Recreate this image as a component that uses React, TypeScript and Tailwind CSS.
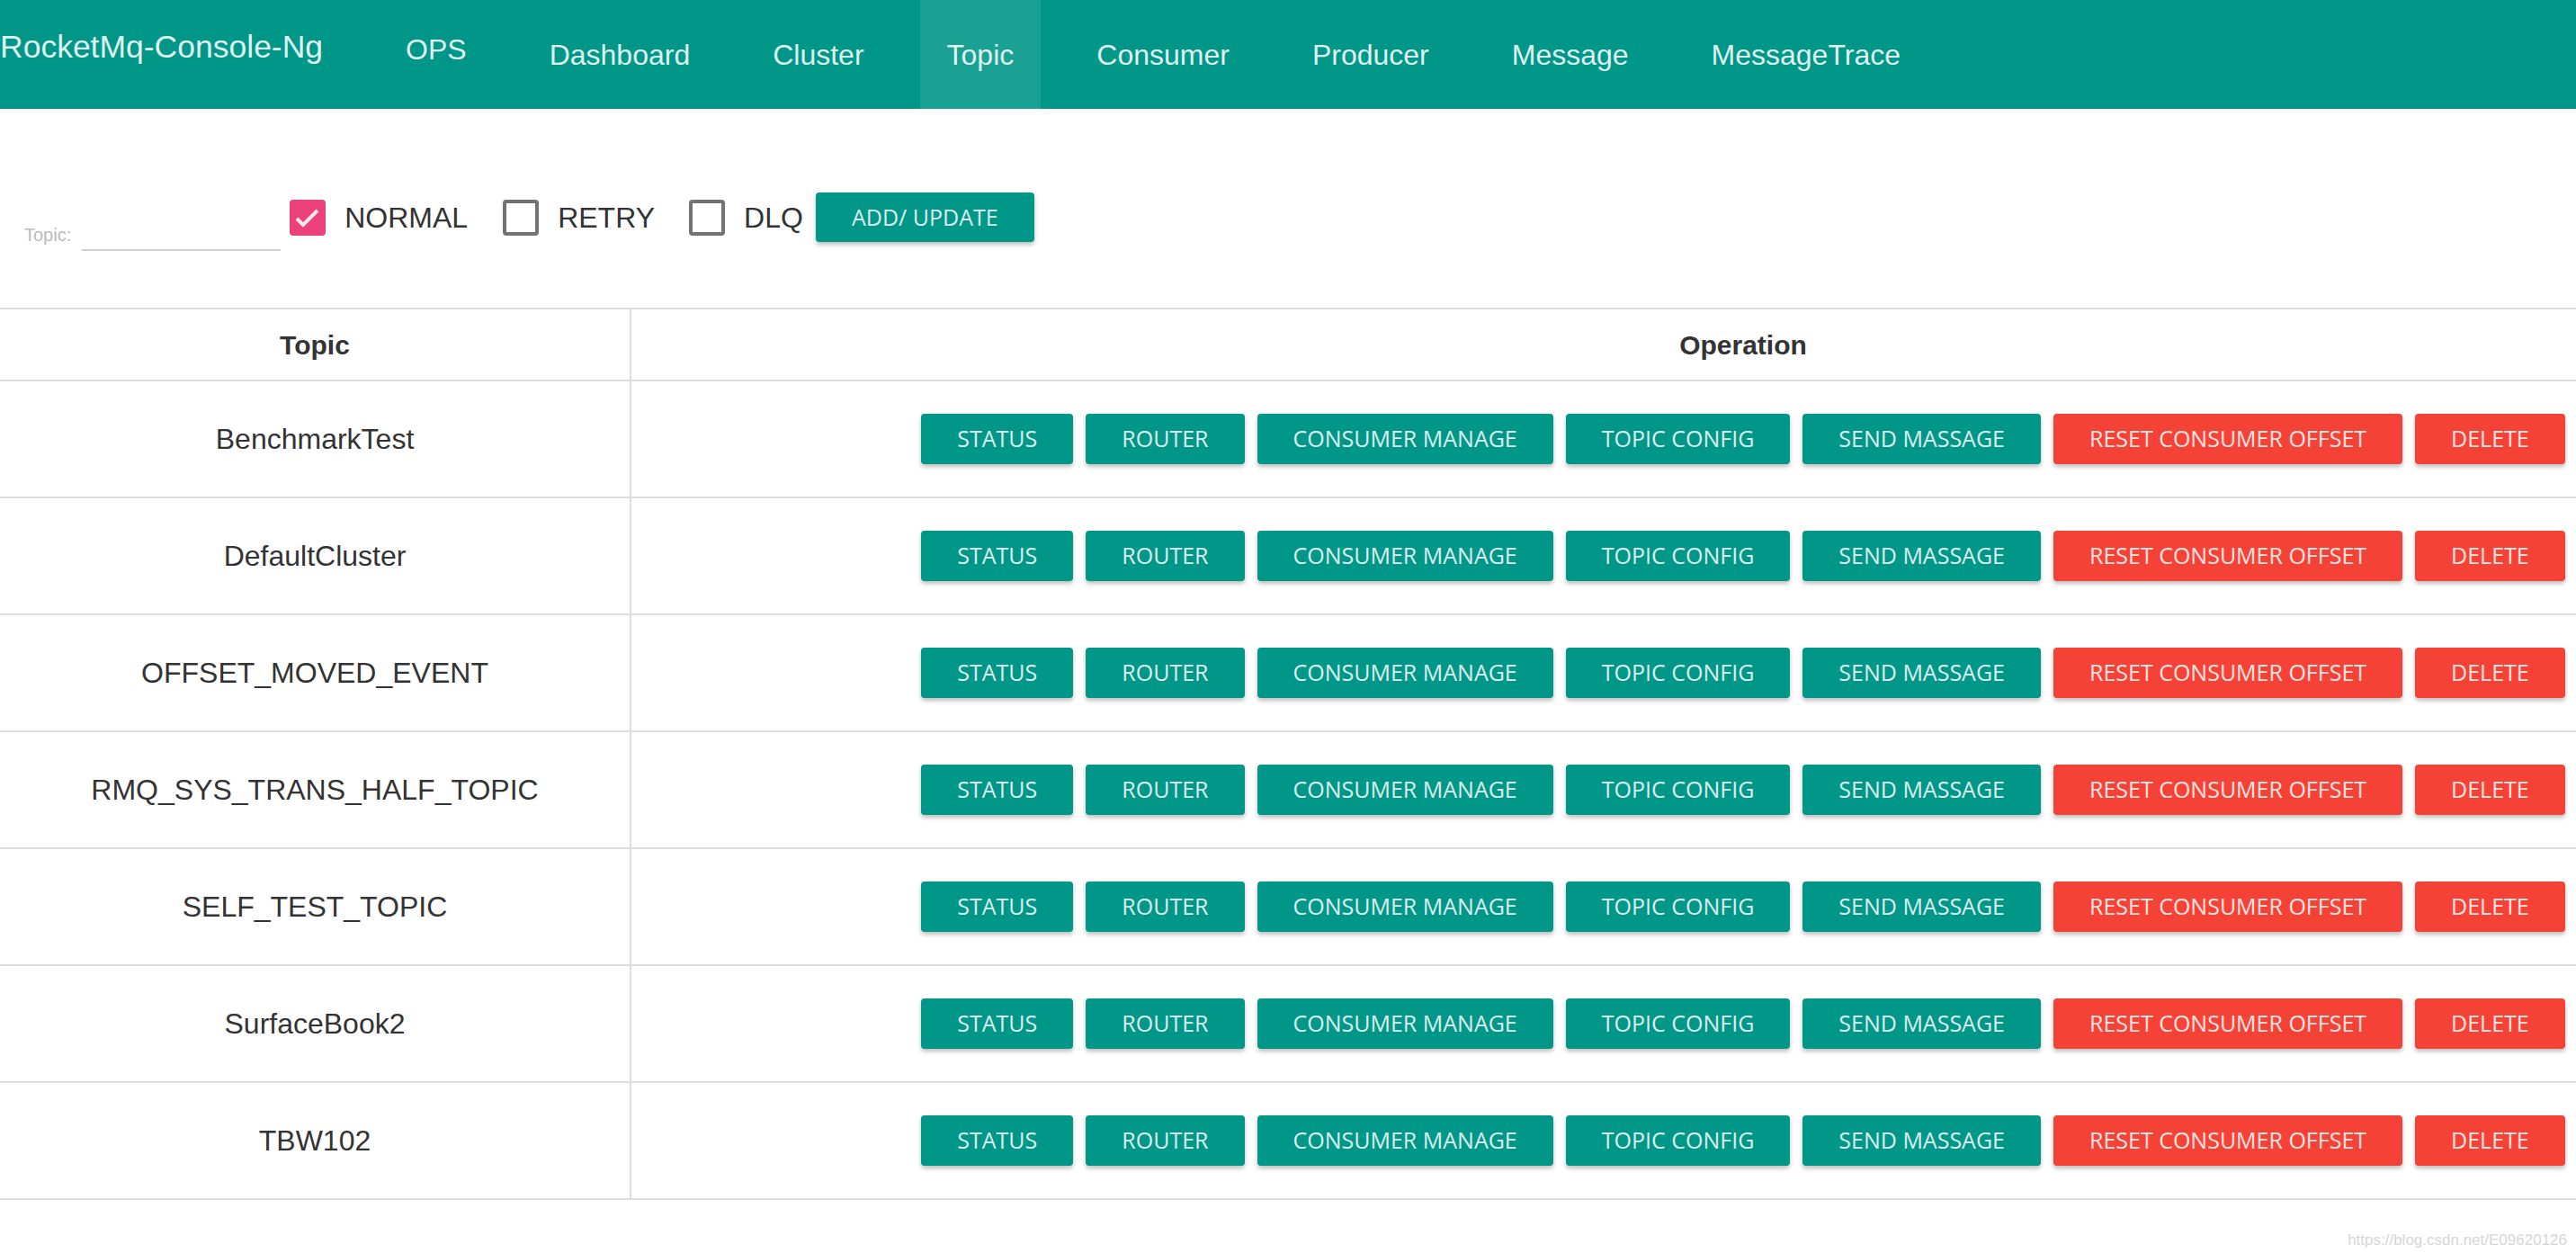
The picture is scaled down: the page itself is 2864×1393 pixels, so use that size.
import React from "react";

const navItems = ["Dashboard", "Cluster", "Topic", "Consumer", "Producer", "Message", "MessageTrace"];

const topics = [
  "BenchmarkTest",
  "DefaultCluster",
  "OFFSET_MOVED_EVENT",
  "RMQ_SYS_TRANS_HALF_TOPIC",
  "SELF_TEST_TOPIC",
  "SurfaceBook2",
  "TBW102",
];

const actions = [
  { label: "STATUS", danger: false },
  { label: "ROUTER", danger: false },
  { label: "CONSUMER MANAGE", danger: false },
  { label: "TOPIC CONFIG", danger: false },
  { label: "SEND MASSAGE", danger: false },
  { label: "RESET CONSUMER OFFSET", danger: true },
  { label: "DELETE", danger: true },
];

function Checkbox({ label, checked }: { label: string; checked?: boolean }) {
  return (
    <label className="flex items-center">
      {checked ? (
        <span className="w-[40px] h-[40px] rounded-[4px] bg-[#ec407a] flex items-center justify-center">
          <svg width="40" height="40" viewBox="0 0 40 40">
            <polyline
              points="8,21 15,28 31,12"
              fill="none"
              stroke="#fbe9ef"
              strokeWidth="4"
            />
          </svg>
        </span>
      ) : (
        <span className="w-[40px] h-[40px] rounded-[4px] border-[4px] border-[#737373]" />
      )}
      <span className="ml-[21px] text-[32px] text-[#333]">{label}</span>
    </label>
  );
}

function ActionButton({ label, danger }: { label: string; danger: boolean }) {
  return (
    <button
      className={`h-[56px] px-[40px] rounded-[4px] text-[25px] text-white/85 shadow-[0_3px_5px_rgba(0,0,0,0.26)] font-['Open_Sans',sans-serif] ${
        danger ? "bg-[#f44336]" : "bg-[#009688]"
      }`}
    >
      {label}
    </button>
  );
}

export default function App() {
  return (
    <div className="w-[2864px] h-[1393px] overflow-hidden bg-white font-['Liberation_Sans',Arial,sans-serif]">
      {/* top bar */}
      <div className="h-[121px] bg-[#009688] flex items-stretch text-[#def3f0]">
        <div className="flex items-center pb-[15px] text-[35.5px] mr-[62px]">RocketMq-Console-Ng</div>
        <div className="flex gap-[32px]">
          <div className="flex items-center px-[30px] pb-[12px] text-[32px]">OPS</div>
          {navItems.map((item) => (
            <div
              key={item}
              className={`flex items-center px-[30px] text-[32px] ${
                item === "Topic" ? "bg-[#1aa194]" : ""
              }`}
            >
              {item}
            </div>
          ))}
        </div>
      </div>

      {/* filter bar */}
      <div className="mt-[93px] h-[66px] flex pl-[27px]">
        <div className="self-end flex items-end">
          <span className="text-[20px] leading-[20px] text-[#bbb] mb-[9px]">Topic:</span>
          <input className="ml-[12px] w-[221px] h-[30px] mb-[1px] border-b-2 border-[#d0d0d0] outline-none" />
        </div>
        <div className="self-start h-[55px] flex items-center ml-[10px]">
          <Checkbox label="NORMAL" checked />
          <div className="ml-[39px]">
            <Checkbox label="RETRY" />
          </div>
          <div className="ml-[38px]">
            <Checkbox label="DLQ" />
          </div>
          <button className="ml-[14px] h-[55px] w-[243px] rounded-[4px] bg-[#009688] text-[25px] text-white/85 shadow-[0_3px_5px_rgba(0,0,0,0.26)] font-['Open_Sans',sans-serif]">
            ADD/ UPDATE
          </button>
        </div>
      </div>

      {/* table */}
      <div className="mt-[62px] w-[3174px] border-t-2 border-[#ddd] text-[#333]">
        <div className="flex h-[80px] border-b-2 border-[#ddd] font-bold text-[30px]">
          <div className="w-[702px] border-r-2 border-[#ddd] flex items-center justify-center">Topic</div>
          <div className="flex-1 flex items-center justify-center">Operation</div>
        </div>
        {topics.map((topic) => (
          <div key={topic} className="flex h-[130px] border-b-2 border-[#ddd]">
            <div className="w-[702px] border-r-2 border-[#ddd] flex items-center justify-center text-[32px]">
              {topic}
            </div>
            <div className="flex-1 flex items-center justify-center gap-[14px]">
              {actions.map((a) => (
                <ActionButton key={a.label} label={a.label} danger={a.danger} />
              ))}
            </div>
          </div>
        ))}
      </div>

      <div className="w-[2864px] flex justify-end pr-[10px] mt-[32px] text-[17px] text-[#d6d6d6]">
        https://blog.csdn.net/E09620126
      </div>
    </div>
  );
}
